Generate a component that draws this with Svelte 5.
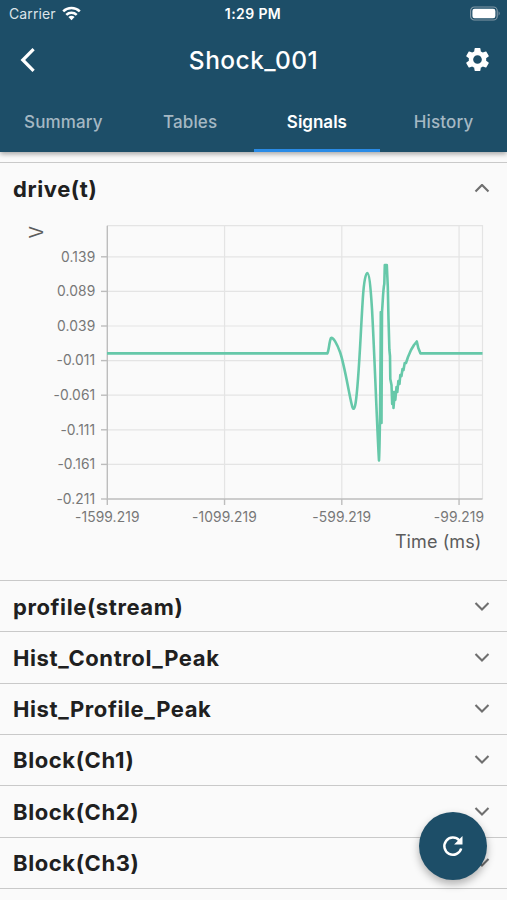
<script>
    const tabs = ['Summary', 'Tables', 'Signals', 'History'];
    let activeTab = 'Signals';

    let signals = [
        { name: 'drive(t)', open: true },
        { name: 'profile(stream)', open: false },
        { name: 'Hist_Control_Peak', open: false },
        { name: 'Hist_Profile_Peak', open: false },
        { name: 'Block(Ch1)', open: false },
        { name: 'Block(Ch2)', open: false },
        { name: 'Block(Ch3)', open: false }
    ];

    // plot area inside the chart svg
    const plot = { left: 107, right: 482.5, top: 11.7, bottom: 285 };
    const xTicks = [-1599.219, -1099.219, -599.219, -99.219];
    const yTicks = [0.139, 0.089, 0.039, -0.011, -0.061, -0.111, -0.161, -0.211];

    const toX = (t) => plot.left + 0.3 + (t + 1599.219) * 0.2345;
    const toY = (v) => plot.bottom - (v + 0.211) * 692;

    // drive trace, already in svg units
    const trace =
        'M107 139.4 H327.3 C329 137 329.2 127 331 124 C333 122.5 337 130 340 138 ' +
        'C344.5 151 348.5 177 351.6 190 Q353.8 200 355.6 189 C358.8 169 360.3 124 362.8 85 ' +
        'C364 66 365.8 59 367.2 59 C369 59 370.4 70 372 95 C374.3 135 377.2 218 379 246.5 ' +
        'C380 226 380.5 166 380.8 98 L381.5 209 L382 98 C382.8 88 383.2 74 384.3 70 ' +
        'L384.8 51 H386.8 L387.8 73 L388.5 105 L389.4 136 L390 142 L390.3 165 L391.5 171 ' +
        'L392.2 190 L393.3 178 L393.5 194 L394.8 178 L395.3 186 L396.5 173 L397.3 178 ' +
        'L398.4 167 L399.5 170 L400.3 161 L401.5 162 L402.5 155 L403.5 156 L404.7 149 ' +
        'L406 149 L408 143 L411 136 L414 131 L416.8 127.5 L418.3 134 L420.5 139.4 H482.5';

    function toggle(signal) {
        signal.open = !signal.open;
        signals = signals;
    }
</script>

<div class="app">
    <header>
        <div class="status-bar">
            <div class="carrier">
                <span>Carrier</span>
                <svg width="19" height="15" viewBox="0 0 19 15">
                    <g fill="none" stroke="#fff" stroke-width="2.5">
                        <path d="M1.2 5.4 A11.8 11.8 0 0 1 17.8 5.4" />
                        <path d="M4.3 8.8 A7.4 7.4 0 0 1 14.7 8.8" />
                    </g>
                    <path d="M6.4 11.1 A4.5 4.5 0 0 1 12.6 11.1 L9.5 14.3 Z" fill="#fff" />
                </svg>
            </div>
            <span class="time">1:29 PM</span>
            <svg class="battery" width="32" height="15" viewBox="0 0 32 15">
                <rect x="1.6" y="1" width="26.6" height="13" rx="3.8" fill="none" stroke="#8198a6" stroke-width="1.2" />
                <rect x="3.4" y="2.8" width="23" height="9.4" rx="2.2" fill="#fff" />
                <path d="M29.6 5.3 Q31.8 7.5 29.6 9.7 Z" fill="#8198a6" />
            </svg>
        </div>

        <div class="title-bar">
            <button class="icon-button" aria-label="Back">
                <svg width="16" height="26" viewBox="0 0 16 26">
                    <path d="M14.6 2.2 L3.8 13 L14.6 23.8" fill="none" stroke="#fff" stroke-width="3.2" />
                </svg>
            </button>
            <h1>Shock_001</h1>
            <button class="icon-button" aria-label="Settings">
                <svg width="29" height="29" viewBox="0 0 24 24">
                    <path fill="#fff" d="M19.14 12.94c.04-.3.06-.61.06-.94 0-.32-.02-.64-.07-.94l2.03-1.58c.18-.14.23-.41.12-.61l-1.92-3.32c-.12-.22-.37-.29-.59-.22l-2.39.96c-.5-.38-1.03-.7-1.62-.94l-.36-2.54c-.04-.24-.24-.41-.48-.41h-3.84c-.24 0-.43.17-.47.41l-.36 2.54c-.59.24-1.13.57-1.62.94l-2.39-.96c-.22-.08-.47 0-.59.22L2.74 8.87c-.12.21-.08.47.12.61l2.03 1.58c-.05.3-.09.63-.09.94s.02.64.07.94l-2.03 1.58c-.18.14-.23.41-.12.61l1.92 3.32c.12.22.37.29.59.22l2.39-.96c.5.38 1.03.7 1.62.94l.36 2.54c.05.24.24.41.48.41h3.84c.24 0 .44-.17.47-.41l.36-2.54c.59-.24 1.13-.56 1.62-.94l2.39.96c.22.08.47 0 .59-.22l1.92-3.32c.12-.22.07-.47-.12-.61l-2.01-1.58zM12 15.6c-1.98 0-3.6-1.62-3.6-3.6s1.62-3.6 3.6-3.6 3.6 1.62 3.6 3.6-1.62 3.6-3.6 3.6z" />
                </svg>
            </button>
        </div>

        <nav>
            {#each tabs as tab}
                <button class="tab" class:active={tab === activeTab} on:click={() => (activeTab = tab)}>
                    {tab}
                </button>
            {/each}
        </nav>
    </header>

    <main>
        {#each signals as signal}
            <section class:open={signal.open}>
                <button class="row" on:click={() => toggle(signal)}>
                    <span>{signal.name}</span>
                    <svg width="16" height="10" viewBox="0 0 16 10">
                        <path
                            d={signal.open ? 'M1.5 7.4 L8 0.9 L14.5 7.4' : 'M1.5 1 L8 7.5 L14.5 1'}
                            fill="none"
                            stroke="#6f6f6f"
                            stroke-width="2.1"
                        />
                    </svg>
                </button>
                {#if signal.open}
                    <svg class="chart" width="507" height="366" viewBox="0 0 507 366">
                        <g class="grid">
                            <path d="M{plot.left} {plot.top} H{plot.right} V{plot.bottom}" />
                            {#each yTicks.slice(0, -1) as v}
                                <path d="M{plot.left} {toY(v)} H{plot.right}" />
                            {/each}
                            {#each xTicks.slice(1) as t}
                                <path d="M{toX(t)} {plot.top} V{plot.bottom}" />
                            {/each}
                        </g>
                        <g class="axis">
                            <path d="M{toX(xTicks[0])} {plot.top} V{plot.bottom} H{plot.right}" />
                            {#each yTicks as v}
                                <path d="M101 {toY(v)} H{plot.left}" />
                            {/each}
                            {#each xTicks as t}
                                <path d="M{toX(t)} {plot.bottom} V291" />
                            {/each}
                        </g>
                        <path class="trace" d={trace} />
                        <g class="labels">
                            {#each yTicks as v}
                                <text x="95.3" y={toY(v) + 4.7} text-anchor="end">{v}</text>
                            {/each}
                            {#each xTicks as t}
                                <text x={toX(t)} y="307.5" text-anchor="middle">{t}</text>
                            {/each}
                        </g>
                        <text class="unit" transform="translate(43 24.5) rotate(-90)">V</text>
                        <text class="unit" x="481.5" y="334" text-anchor="end">Time (ms)</text>
                    </svg>
                {/if}
            </section>
        {/each}
    </main>

    <button class="refresh" aria-label="Refresh">
        <svg width="24" height="24" viewBox="0 0 24 24">
            <path d="M20.2 14.5 A8.6 8.6 0 1 1 18.3 6.3" fill="none" stroke="#fff" stroke-width="2.5" />
            <path d="M21.5 2 V10.4 H13.1 Z" fill="#fff" />
        </svg>
    </button>
</div>

<style>
    :global(body) {
        margin: 0;
        background: #fafafa;
    }

    button {
        border: none;
        padding: 0;
        background: none;
        font: inherit;
        color: inherit;
        cursor: pointer;
    }

    svg {
        display: block;
        flex-shrink: 0;
    }

    .app {
        position: relative;
        height: 900px;
        overflow: hidden;
        background: #fafafa;
        font-family: Inter, "Liberation Sans", sans-serif;
        display: flex;
        flex-direction: column;
    }

    header {
        height: 152px;
        flex-shrink: 0;
        background: #1d4e68;
        color: #fff;
        box-shadow: 0 2px 5px rgba(0, 0, 0, 0.35);
        z-index: 1;
    }

    .status-bar {
        height: 27px;
        display: grid;
        grid-template-columns: 1fr auto 1fr;
        align-items: center;
        padding: 0 6px 0 9px;
        font-size: 14px;
    }

    .carrier {
        display: flex;
        align-items: center;
        gap: 6px;
        color: #dce4e9;
        font-size: 14px;
        letter-spacing: 0.1px;
    }

    .time {
        font-weight: 600;
        letter-spacing: 0.4px;
        margin-right: 4px;
    }

    .battery {
        justify-self: end;
    }

    .title-bar {
        height: 65px;
        display: flex;
        align-items: center;
        justify-content: space-between;
        padding: 0 15px 0 19px;
    }

    .icon-button {
        width: 29px;
    }

    h1 {
        margin: 0 4px 0 0;
        font-size: 24.5px;
        font-weight: 500;
        letter-spacing: 0.45px;
    }

    nav {
        height: 60px;
        display: grid;
        grid-template-columns: repeat(4, 1fr);
    }

    .tab {
        padding-top: 2px;
        border-bottom: 3px solid transparent;
        font-size: 17px;
        font-weight: 500;
        color: #a5b8c3;
        letter-spacing: 0.15px;
    }

    .tab.active {
        color: #fff;
        font-weight: 600;
        letter-spacing: 0;
        border-bottom-color: #2a8be6;
    }

    main {
        padding-top: 10px;
    }

    section {
        box-sizing: border-box;
        height: 51.33px;
        border-top: 1.5px solid #c9c9c9;
    }

    section:last-child {
        height: 52.8px;
        border-bottom: 1.5px solid #c9c9c9;
    }

    section.open {
        height: 418px;
    }

    .row {
        width: 100%;
        height: 51px;
        display: flex;
        align-items: center;
        justify-content: space-between;
        padding: 0 17px 0 13px;
        font-size: 22px;
        font-weight: 650;
        letter-spacing: 0.6px;
        color: #202020;
    }

    .grid path {
        fill: none;
        stroke: #e4e4e4;
        stroke-width: 1.2;
    }

    .axis path {
        fill: none;
        stroke: #bdbdbd;
        stroke-width: 1.4;
    }

    .trace {
        fill: none;
        stroke: #66c8a9;
        stroke-width: 2.6;
        stroke-linejoin: round;
    }

    .labels text {
        font-size: 13.8px;
        letter-spacing: 0.1px;
        fill: #777;
    }

    .unit {
        font-size: 18px;
        fill: #5c5c5c;
        letter-spacing: 0.1px;
    }

    .refresh {
        position: absolute;
        right: 20px;
        bottom: 20px;
        width: 68px;
        height: 68px;
        border-radius: 50%;
        background: #1d4e68;
        display: flex;
        align-items: center;
        justify-content: center;
        box-shadow: 0 4px 9px rgba(0, 0, 0, 0.3);
        z-index: 2;
    }
</style>
